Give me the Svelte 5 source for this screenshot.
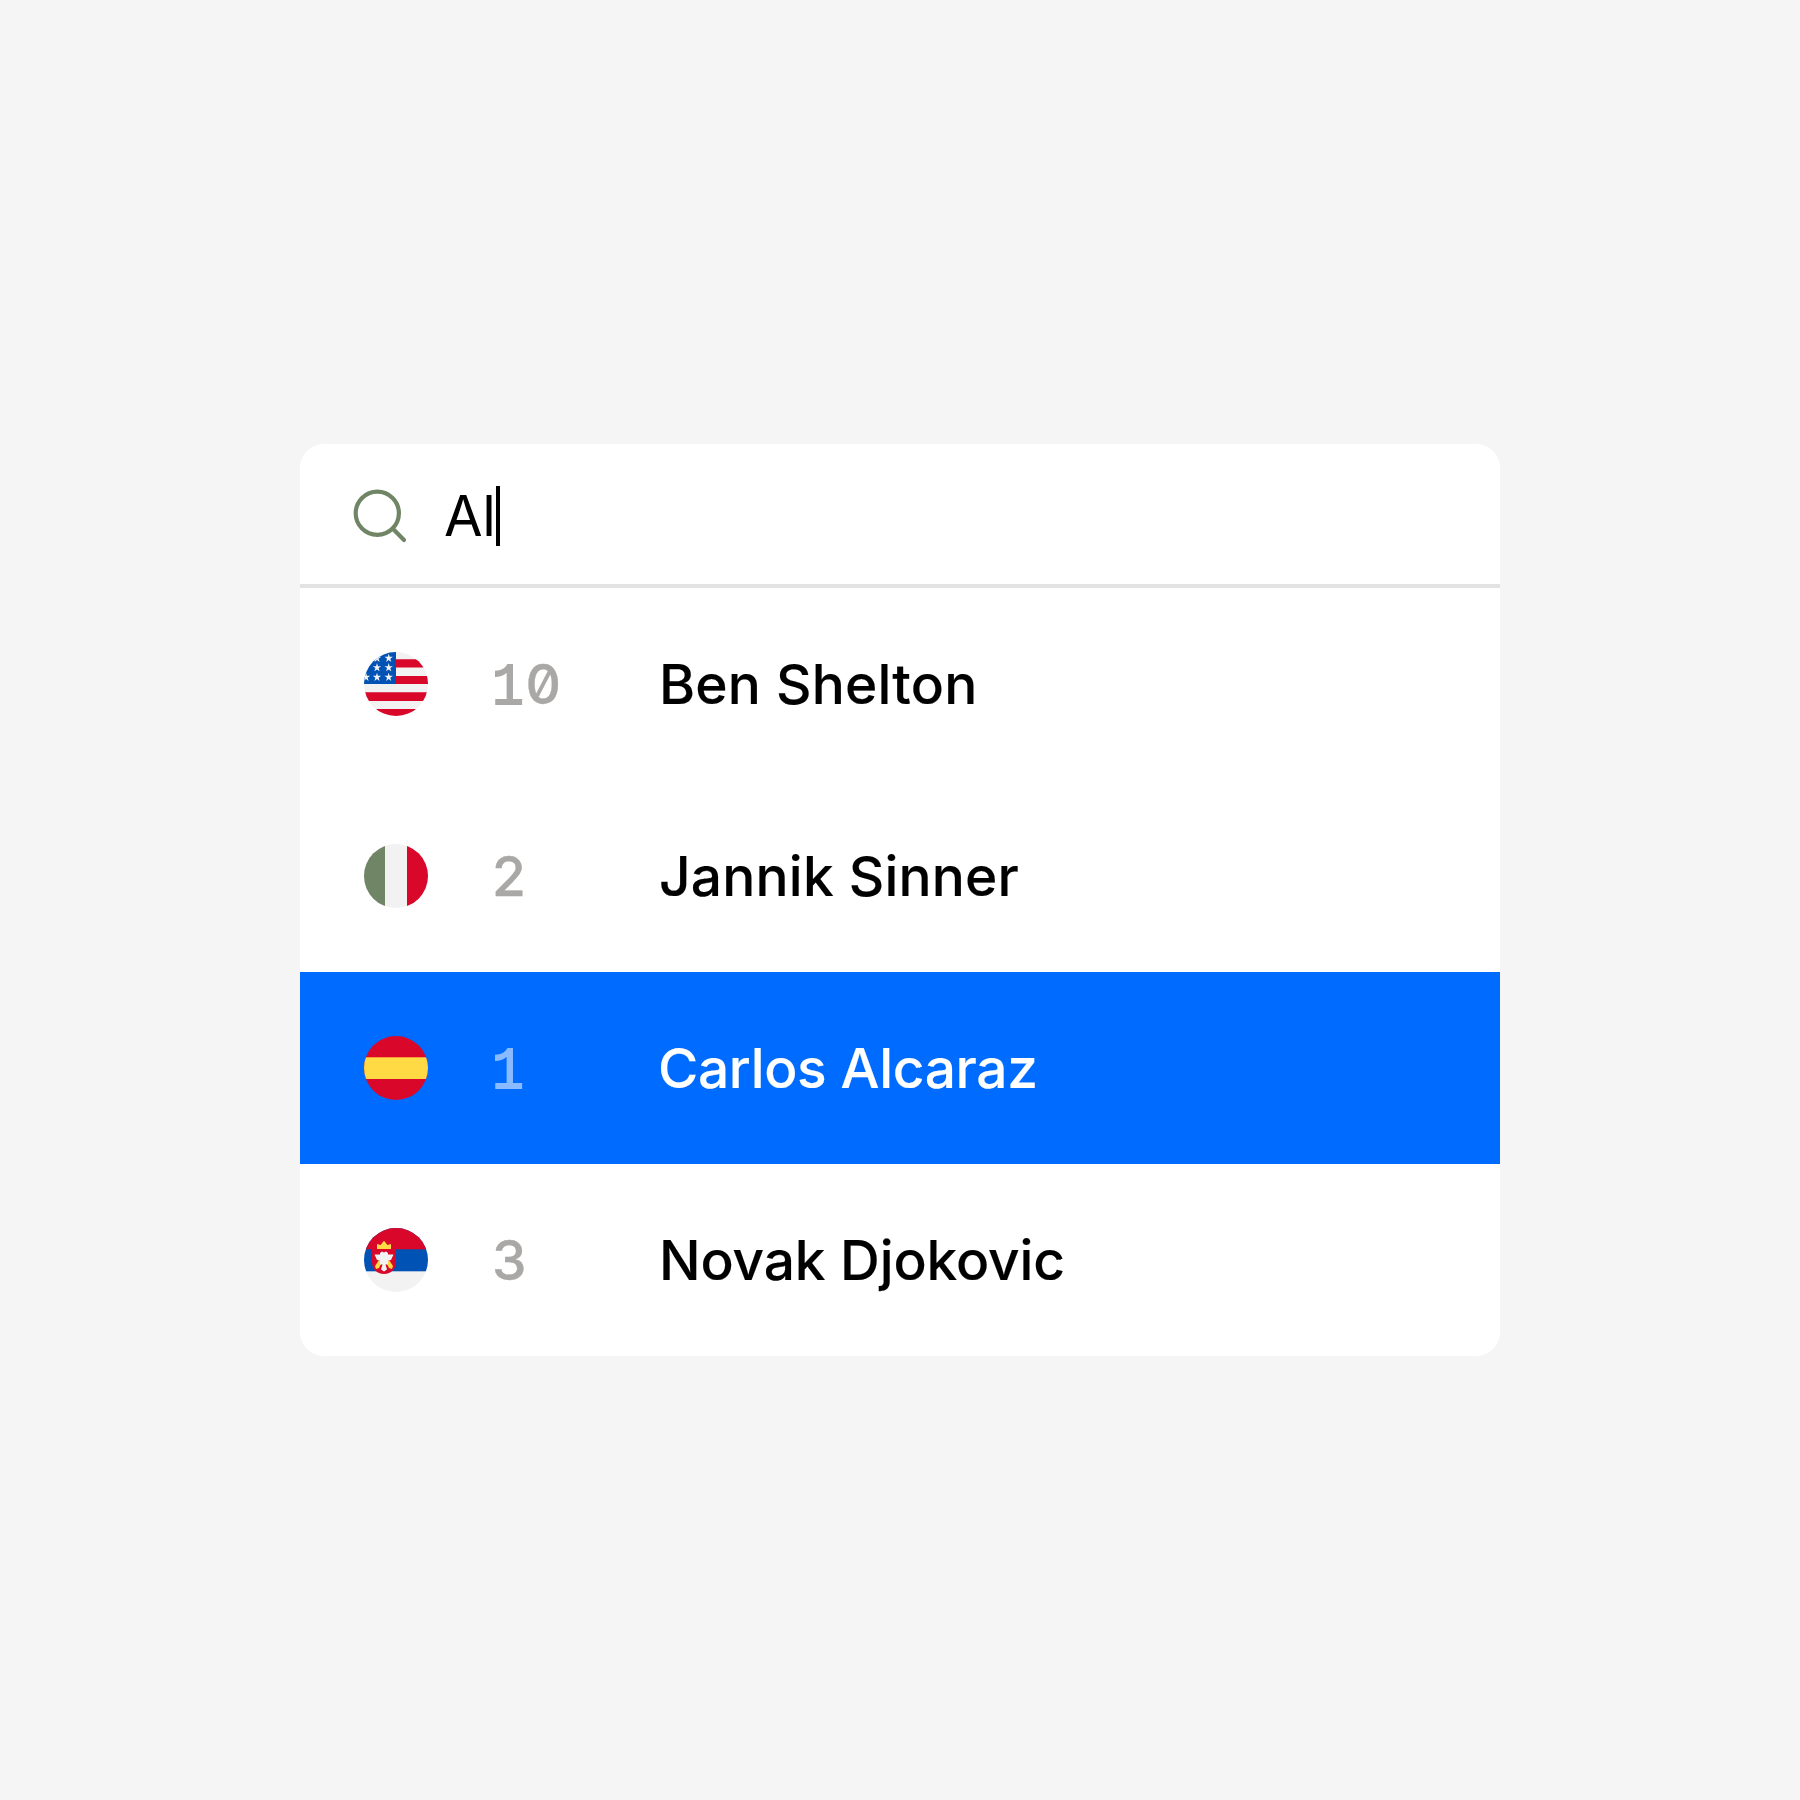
<script>
  let query = 'Al';

  const players = [
    { country: 'us', rank: 10, name: 'Ben Shelton', tracking: 0.2 },
    { country: 'it', rank: 2, name: 'Jannik Sinner', tracking: 0.2 },
    { country: 'es', rank: 1, name: 'Carlos Alcaraz', tracking: -0.35 },
    { country: 'rs', rank: 3, name: 'Novak Djokovic', tracking: -0.1 },
  ];

  let selected = 2;

  // star centers in the US flag
  const stars = [
    [13, 6], [24.7, 6],
    [13, 15.4], [24.7, 15.4],
    [2, 25], [13, 25], [24.7, 25],
  ];
</script>

<div class="page">
  <div class="panel">
    <div class="search">
      <svg class="search-icon" viewBox="0 0 56 56">
        <circle cx="25.3" cy="25.3" r="21.6" />
        <path d="M40.6 40.6L52 52" />
      </svg>
      <div class="query">{query}</div>
      <div class="caret"></div>
    </div>

    <div class="results">
      {#each players as player, i}
        <div class="row" class:selected={i === selected}>
          <svg class="flag" viewBox="0 0 64 64">
            {#if player.country === 'us'}
              <rect width="64" height="64" fill="#f2f2f2" />
              <path d="M32 7.3h32v8.2H32zM32 24h32v8H32zM0 40.3h64v8.7H0zM0 57h64v7H0z" fill="#d90729" />
              <rect width="32" height="32" fill="#0052b4" />
              {#each stars as [x, y]}
                <path transform="translate({x} {y})" d="M0-4.3L1-1.2H4.2L1.6.7l1 3.2L0 2l-2.6 1.9 1-3.2L-4.2-1.2H-1z" fill="#f2f2f2" />
              {/each}
            {:else if player.country === 'it'}
              <rect width="64" height="64" fill="#f2f2f2" />
              <rect width="21" height="64" fill="#6f8565" />
              <rect x="43" width="21" height="64" fill="#d90729" />
            {:else if player.country === 'es'}
              <rect width="64" height="64" fill="#d90729" />
              <rect y="21.3" width="64" height="21.7" fill="#ffda44" />
            {:else}
              <rect width="64" height="64" fill="#f2f2f2" />
              <rect width="64" height="43.3" fill="#0052b4" />
              <rect width="64" height="21.3" fill="#d90729" />
              <path d="M8 21h24v13c0 8-6 12-12 12S8 42 8 34z" fill="#d90729" />
              <path d="M13 21v-5l3.5 1L20 12.8l3.5 4.2 3.5-1v5z" fill="#ffda44" />
              <path d="M11 38l4-6 3 2-3 6-3 1zM29 38l-4-6-3 2 3 6 3 1z" fill="#ffda44" />
              <path d="M16 25l2-1.5 2 1 2-1 2 1.5v1.5h5.5L27 32l-3 .5v4h-2.500l1.500 5-3 2-3-2 1.500-5H16v-4l-3-.5-2.500-5.500H16z" fill="#f2f2f2" />
            {/if}
          </svg>
          <div class="rank">
            {#each String(player.rank) as digit}<span class:one={digit === '1'}>{digit}</span>{/each}
          </div>
          <div class="name" style="letter-spacing: {player.tracking}px">{player.name}</div>
        </div>
      {/each}
    </div>
  </div>
</div>

<style>
  :global(body) {
    background: #f5f5f5;
  }

  .page {
    height: 100vh;
    display: flex;
    align-items: center;
    justify-content: center;
    font-family: Inter, "Liberation Sans", sans-serif;
  }

  .panel {
    width: 1200px;
    border-radius: 24px;
    background: #fff;
    overflow: hidden;
  }

  .search {
    box-sizing: border-box;
    height: 144px;
    padding-left: 52px;
    display: flex;
    align-items: center;
    border-bottom: 4px solid #e3e3e3;
  }

  .search-icon {
    width: 56px;
    height: 56px;
    margin-right: 36px;
    margin-top: 4px;
    fill: none;
    stroke: #6f8565;
    stroke-width: 4.2;
    stroke-linecap: round;
  }

  .query {
    padding-top: 3px;
    font-size: 56px;
    line-height: 60px;
    letter-spacing: -0.5px;
    color: #000;
  }

  .caret {
    width: 4px;
    height: 60px;
    margin-top: 4px;
    margin-left: 1px;
    background: #000;
  }

  .row {
    height: 192px;
    padding-left: 64px;
    display: flex;
    align-items: center;
    color: #000;
  }

  .row.selected {
    background: #006bff;
    color: #fff;
  }

  .flag {
    width: 64px;
    height: 64px;
    margin-right: 64px;
    border-radius: 50%;
  }

  .rank {
    width: 167px;
    font-size: 55px;
    line-height: 64px;
    font-weight: 500;
    font-feature-settings: "zero";
    color: #a9a8a7;
    -webkit-text-stroke: 0.3px currentColor;
  }

  .rank span {
    display: inline-block;
    width: 33.6px;
    text-align: center;
  }

  /* footed one */
  .rank .one {
    font-family: "Liberation Mono", monospace;
    font-size: 59px;
    line-height: 1px;
    text-indent: -2px;
    transform: scaleX(0.9);
    -webkit-text-stroke: 1.8px currentColor;
  }

  .selected .rank {
    color: #8abaff;
  }

  .name {
    font-size: 55px;
    line-height: 64px;
    font-weight: 500;
    white-space: nowrap;
    -webkit-text-stroke: 0.15px currentColor;
  }

  .selected .name {
    margin-left: -1px;
  }
</style>
